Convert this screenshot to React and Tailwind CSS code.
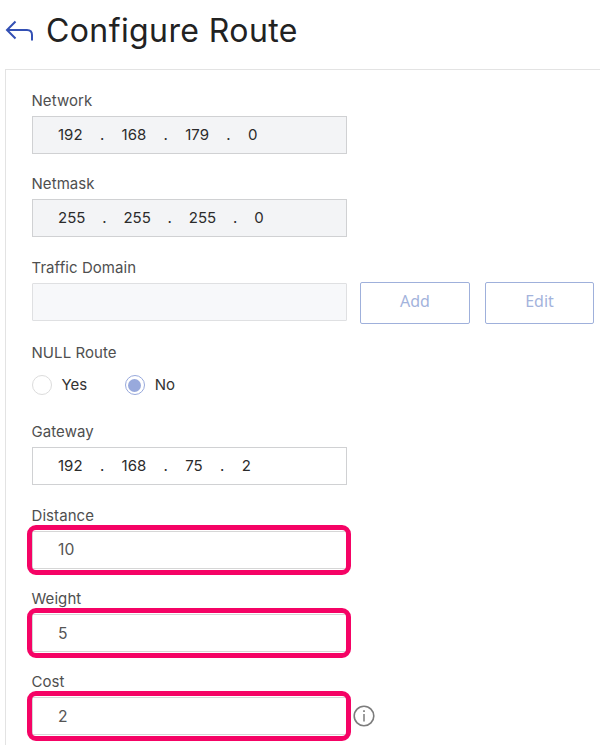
import React from "react";
import clsx from "clsx";

const Field = ({ label, className, children }) => (
  <div className={clsx("flex flex-col", className)}>
    <label className="h-[31px] text-[15px] leading-[32px] tracking-[0.07px] text-[#4f4f4f]">
      {label}
    </label>
    {children}
  </div>
);

const IpInput = ({ value, disabled, dotClass = "w-[39px]" }) => {
  const octets = value.split(".");
  return (
    <div
      className={clsx(
        "flex h-[38px] w-[315.5px] items-center border border-[#d0d1d3] pl-[25.5px] text-[15px] text-[#2b2b2b]",
        disabled ? "bg-[#f3f4f6]" : "bg-white"
      )}
    >
      {octets.map((octet, idx) => (
        <React.Fragment key={idx}>
          {idx > 0 && (
            <span className={clsx("text-center", dotClass)}>.</span>
          )}
          <span>{octet}</span>
        </React.Fragment>
      ))}
    </div>
  );
};

const NumberInput = ({ value }) => (
  <div className="relative flex h-[38px] w-[315.5px] items-center border border-[#d6d6d6] bg-white pt-[1px] pl-[25.5px] text-[15.7px] text-[#555]">
    {value}
    {/* highlight frame around the input */}
    <span className="absolute -top-[7px] -left-[6px] h-[50px] w-[324px] rounded-[9px] border-5 border-[#f50365]" />
  </div>
);

const Radio = ({ label, checked }) => (
  <div className="flex items-center text-[15px] text-[#333]">
    <span
      className={clsx(
        "mr-[10px] flex size-5 items-center justify-center rounded-full border",
        checked ? "border-[#98a9dc]" : "border-[#dcdcdc]"
      )}
    >
      {checked && <span className="size-[13px] rounded-full bg-[#98a9dc]" />}
    </span>
    {label}
  </div>
);

const OutlineButton = ({ children, className }) => (
  <button
    className={clsx(
      "h-[42px] rounded-[2px] border border-[#9fb0db] bg-white pb-[4px] font-['Noto_Sans',sans-serif] text-[16px] text-[#a3b3dc]",
      className
    )}
  >
    {children}
  </button>
);

const App = () => {
  return (
    <div className="flex h-[745px] w-[600px] flex-col overflow-hidden bg-white font-[Inter,sans-serif]">
      <header className="flex h-[69px] shrink-0 items-start">
        <svg
          className="mt-[18px] ml-[5px] shrink-0"
          width="30"
          height="24"
          viewBox="0 0 30 24"
          fill="none"
          stroke="#3350b4"
          strokeWidth="2"
        >
          <path d="M10.5 3.5 L2 12 L10.5 20.5" />
          <path d="M2 12 H22 Q27 12 27 17 V22.5" />
        </svg>
        <h1 className="ml-[11px] text-[32px] leading-[62px] tracking-[0.4px] whitespace-nowrap text-[#222]">
          Configure Route
        </h1>
      </header>

      <main className="ml-[5px] flex w-[620px] flex-1 shrink-0 flex-col border-t border-l border-[#e3e3e3] pt-[15px] pl-[25.5px]">
        <Field label="Network" className="h-[83px]">
          <IpInput value="192.168.179.0" disabled />
        </Field>
        <Field label="Netmask" className="h-[84px]">
          <IpInput value="255.255.255.0" disabled dotClass="w-[38px]" />
        </Field>
        <Field label="Traffic Domain" className="h-[85px]">
          <div className="flex items-start">
            <div className="h-[38px] w-[315.5px] rounded-[1px] border border-[#dfe0e2] bg-[#f7f8fa]" />
            <OutlineButton className="-mt-[1px] ml-[13px] w-[110px]">
              Add
            </OutlineButton>
            <OutlineButton className="-mt-[1px] ml-[15px] w-[109px]">
              Edit
            </OutlineButton>
          </div>
        </Field>
        <Field label="NULL Route" className="h-[79px]">
          <div className="flex h-[34px] items-center gap-[37.5px]">
            <Radio label="Yes" />
            <Radio label="No" checked />
          </div>
        </Field>
        <Field label="Gateway" className="h-[83.5px]">
          <IpInput value="192.168.75.2" />
        </Field>
        <Field label="Distance" className="h-[83.5px]">
          <NumberInput value="10" />
        </Field>
        <Field label="Weight" className="h-[83px]">
          <NumberInput value="5" />
        </Field>
        <Field label="Cost" className="h-[83px]">
          <div className="flex items-center">
            <NumberInput value="2" />
            <svg
              className="ml-[6px]"
              width="22"
              height="22"
              viewBox="0 0 22 22"
              fill="none"
              stroke="#7c7c7c"
            >
              <circle cx="11" cy="11" r="9.8" strokeWidth="1.6" />
              <path d="M11 9 V16.5" strokeWidth="1.5" />
              <path d="M11 5.3 V7" strokeWidth="1.7" />
            </svg>
          </div>
        </Field>
      </main>
    </div>
  );
};

export default App;
